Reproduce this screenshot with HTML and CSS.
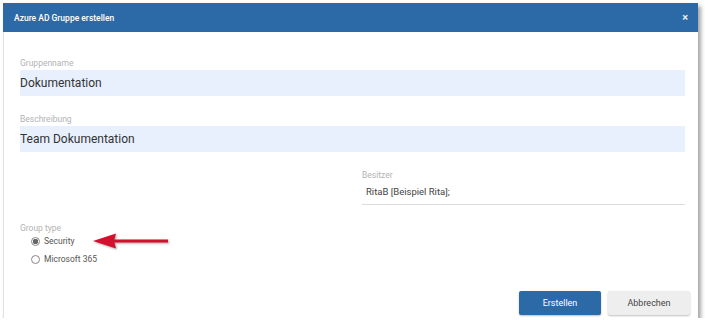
FILE: index.html
```html
<!DOCTYPE html>
<html lang="de">
<head>
  <meta charset="UTF-8">
  <title>Azure AD Gruppe erstellen</title>
  <link rel="stylesheet" href="styles.css">
</head>
<body>
  <div class="dialog">
    <div class="dialog-header">
      <span class="dialog-title">Azure AD Gruppe erstellen</span>
      <span class="close">&#215;</span>
    </div>
    <div class="dialog-body">
      <div class="field">
        <label>Gruppenname</label>
        <div class="input filled">Dokumentation</div>
      </div>
      <div class="field">
        <label>Beschreibung</label>
        <div class="input filled">Team Dokumentation</div>
      </div>
      <div class="owner-row">
        <div class="field owner">
          <label>Besitzer</label>
          <div class="input line">RitaB [Beispiel Rita];</div>
        </div>
      </div>
      <div class="group-type">
        <label>Group type</label>
        <div class="radio checked">Security
          <svg class="arrow" width="80" height="18" viewBox="0 0 80 18">
            <path d="M22 7.5 L76 7.5 L76 10.5 L22 10.5 Z" fill="#d3102e"/>
            <path d="M1 9 L24 1.5 L22 9 L24 16.5 Z" fill="#d3102e"/>
          </svg>
        </div>
        <div class="radio">Microsoft 365</div>
      </div>
      <div class="actions">
        <button class="btn primary">Erstellen</button>
        <button class="btn">Abbrechen</button>
      </div>
    </div>
  </div>
</body>
</html>
```

FILE: styles.css
```css
body {
  margin: 0;
  background: #fff;
  font-family: Roboto, 'Liberation Sans', sans-serif;
}
.dialog {
  margin: 3px 0 0 3px;
  width: 695px;
  height: 315px;
  background: #fff;
  border-left: 1px solid #e2e2e2;
  box-sizing: border-box;
  box-shadow: 3px 3px 4px rgba(0,0,0,0.35);
  display: flex;
  flex-direction: column;
}
.dialog-header {
  background: #2b6aa6;
  height: 29px;
  display: flex;
  align-items: center;
  justify-content: space-between;
  padding: 0 10px 0 11px;
  margin-left: -1px;
}
.dialog-title {
  color: #fff;
  font-size: 8.5px;
  font-weight: 500;
}
.close {
  color: #e8eef6;
  font-size: 11px;
  font-weight: bold;
}
.dialog-body {
  padding: 26px 13px 0 16px;
  position: relative;
  flex: 1;
}
.field label, .group-type label {
  display: block;
  font-size: 8.5px;
  color: #b3b3b3;
  margin-bottom: 2px;
}
.input {
  height: 26px;
  line-height: 26px;
  font-size: 12px;
  color: #333;
}
.filled {
  background: #e8f0fe;
}
.field {
  margin-bottom: 18px;
}
.owner-row {
  display: flex;
  justify-content: flex-end;
  margin-top: 2px;
}
.owner {
  width: 323px;
}
.line {
  height: 22px;
  line-height: 20px;
  border-bottom: 1px solid #dcdcdc;
  font-size: 9.5px;
  color: #444;
  padding-left: 4px;
}
.group-type {
  margin-top: 0;
}
.group-type label {
  margin-bottom: -1px;
}
.radio {
  position: relative;
  display: flex;
  align-items: center;
  font-size: 8.5px;
  color: #555;
  padding-left: 11px;
  height: 18px;
}
.radio::before {
  content: '';
  width: 7px;
  height: 7px;
  border: 1px solid #888;
  border-radius: 50%;
  margin-right: 4px;
  box-sizing: content-box;
}
.radio.checked::before {
  background: radial-gradient(circle, #666 0 2.5px, #fff 3px);
}
.arrow {
  position: absolute;
  left: 72px;
  top: 0;
  filter: drop-shadow(1px 1px 1px rgba(0,0,0,0.35));
}
.actions {
  position: absolute;
  right: 8px;
  bottom: 3px;
  display: flex;
  gap: 7px;
}
.btn {
  width: 82px;
  height: 24px;
  border: none;
  border-radius: 2px;
  background: #eeeeee;
  color: #444;
  font-family: Roboto, 'Liberation Sans', sans-serif;
  font-size: 9px;
  box-shadow: 0 1px 2px rgba(0,0,0,0.25);
}
.btn.primary {
  background: #2b6aa6;
  color: #fff;
}
```
